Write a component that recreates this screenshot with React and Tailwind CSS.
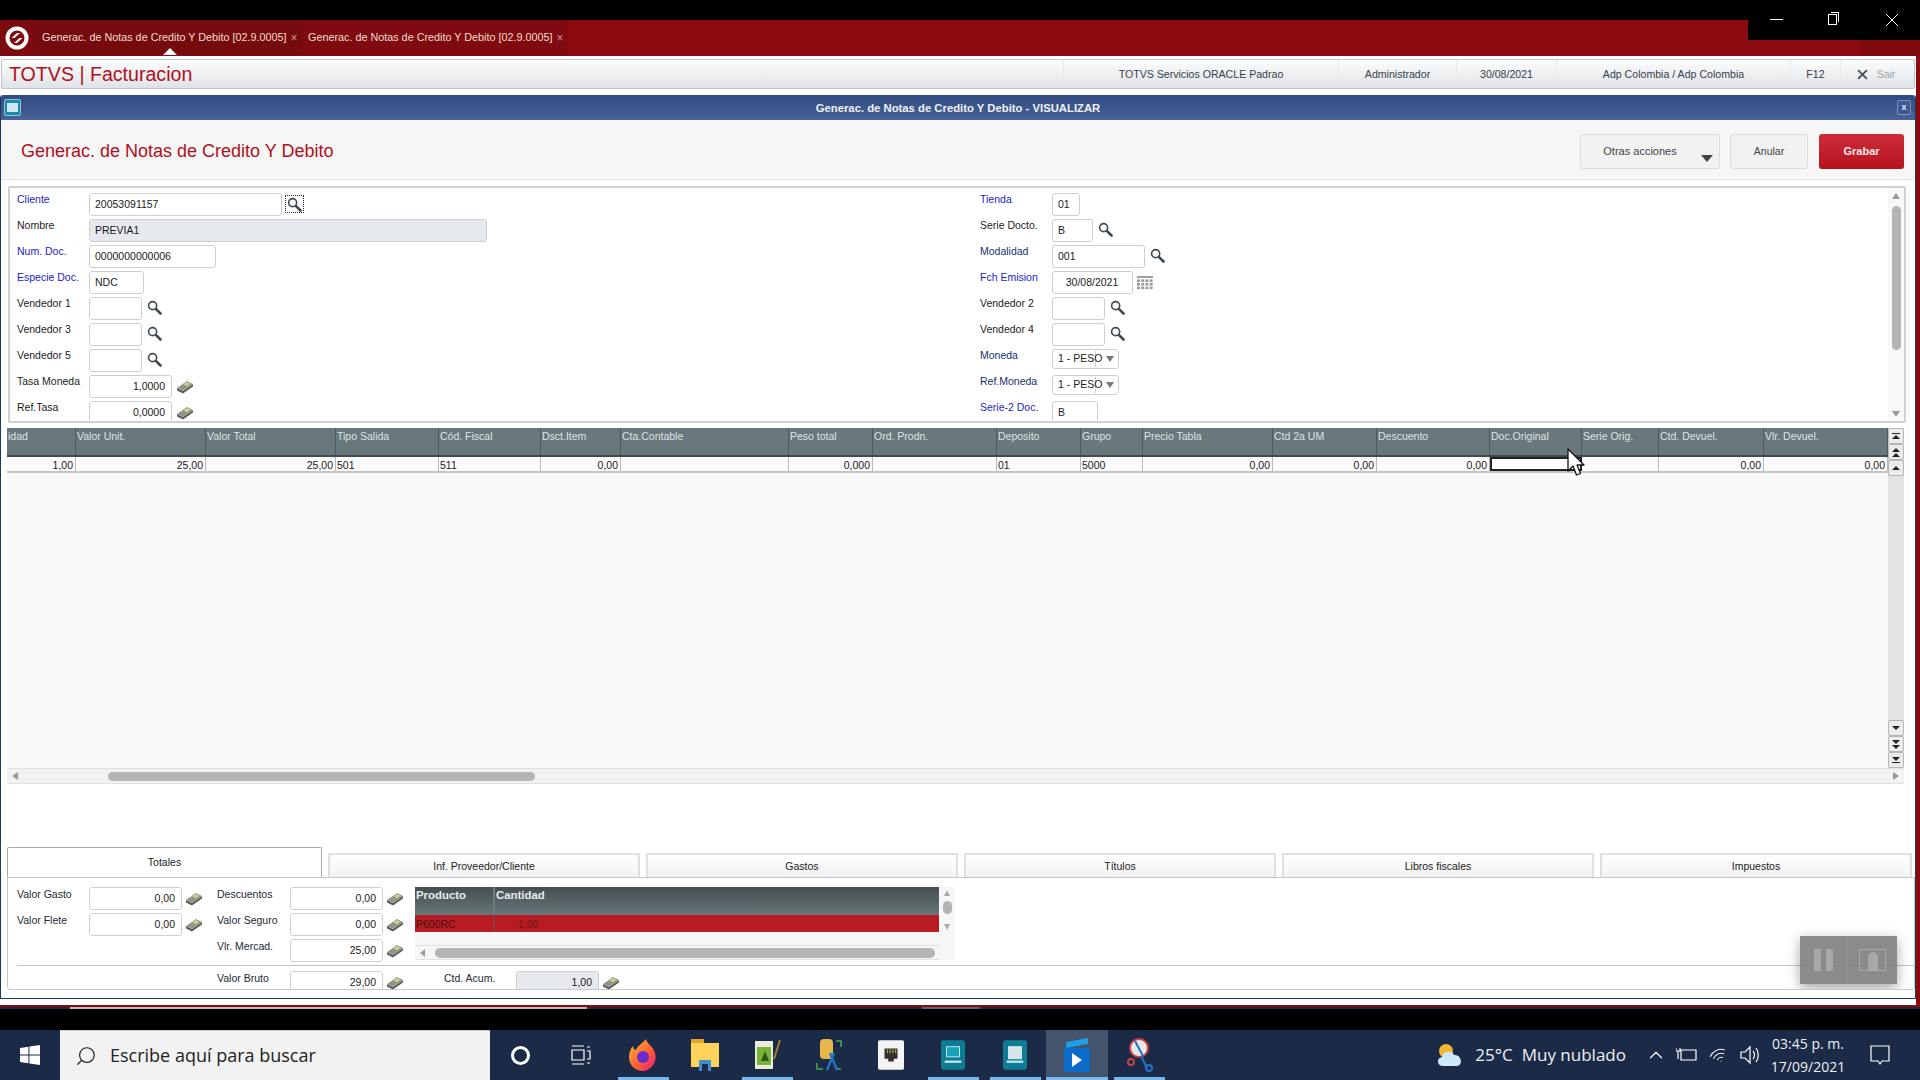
import React from 'react';
import { Search, ChevronUp, Wifi } from 'lucide-react';

const leftRows = [
  { label: 'Cliente', tone: 'blue', w: 193, value: '20053091157', icon: 'boxed' },
  { label: 'Nombre', w: 398, value: 'PREVIA1', disabled: true },
  { label: 'Num. Doc.', tone: 'blue', w: 127, value: '0000000000006' },
  { label: 'Especie Doc.', tone: 'blue', w: 55, value: 'NDC' },
  { label: 'Vendedor 1', w: 53, value: '', icon: 'search' },
  { label: 'Vendedor 3', w: 53, value: '', icon: 'search' },
  { label: 'Vendedor 5', w: 53, value: '', icon: 'search' },
  { label: 'Tasa Moneda', w: 83, value: '1,0000', right: true, icon: 'money' },
  { label: 'Ref.Tasa', w: 83, value: '0,0000', right: true, icon: 'money' },
];

const rightRows = [
  { label: 'Tienda', tone: 'blue', w: 28, value: '01' },
  { label: 'Serie Docto.', w: 41, value: 'B', icon: 'search' },
  { label: 'Modalidad', tone: 'navy', w: 93, value: '001', icon: 'search' },
  { label: 'Fch Emision', tone: 'blue', w: 81, value: '30/08/2021', center: true, icon: 'calendar' },
  { label: 'Vendedor 2', w: 53, value: '', icon: 'search' },
  { label: 'Vendedor 4', w: 53, value: '', icon: 'search' },
  { label: 'Moneda', tone: 'navy', value: '1 - PESO', select: true },
  { label: 'Ref.Moneda', tone: 'navy', value: '1 - PESO', select: true },
  { label: 'Serie-2 Doc.', tone: 'blue', w: 46, value: 'B' },
];

const columns = [
  { title: 'idad', w: 69, value: '1,00', right: true },
  { title: 'Valor Unit.', w: 130, value: '25,00', right: true },
  { title: 'Valor Total', w: 130, value: '25,00', right: true },
  { title: 'Tipo Salida', w: 103, value: '501' },
  { title: 'Cód. Fiscal', w: 102, value: '511' },
  { title: 'Dsct.Item', w: 80, value: '0,00', right: true },
  { title: 'Cta.Contable', w: 168, value: '' },
  { title: 'Peso total', w: 84, value: '0,000', right: true },
  { title: 'Ord. Prodn.', w: 124, value: '' },
  { title: 'Deposito', w: 84, value: '01' },
  { title: 'Grupo', w: 62, value: '5000' },
  { title: 'Precio Tabla', w: 130, value: '0,00', right: true },
  { title: 'Ctd 2a UM', w: 104, value: '0,00', right: true },
  { title: 'Descuento', w: 113, value: '0,00', right: true },
  { title: 'Doc.Original', w: 92, value: '', selected: true },
  { title: 'Serie Orig.', w: 77, value: '' },
  { title: 'Ctd. Devuel.', w: 105, value: '0,00', right: true },
  { title: 'Vlr. Devuel.', w: 124, value: '0,00', right: true },
];

const headerInfo = [
  { text: 'TOTVS Servicios ORACLE Padrao', w: 275 },
  { text: 'Administrador', w: 118 },
  { text: '30/08/2021', w: 100 },
  { text: 'Adp Colombia / Adp Colombia', w: 234 },
  { text: 'F12', w: 50 },
];

const toneClass = {
  blue: 'text-[#1b1bc8]',
  navy: 'text-[#14306e]',
};

const MoneyIcon = ({ className = '' }) => (
  <svg viewBox="0 0 18 14" className={`h-[14px] w-[18px] shrink-0 ${className}`}>
    <polygon points="1,8 7,11 17,4 17,6.5 7,13.5 1,10.5" fill="#5e5e58" />
    <polygon points="1,8 11,1 17,4 7,11" fill="#94948a" />
    <polygon points="7.5,4.2 11,2 14.4,3.8 11,6.2" fill="#c8d88a" />
  </svg>
);

const Magnifier = () => (
  <svg viewBox="0 0 16 16" className="h-[15px] w-[15px]">
    <circle cx="6" cy="6" r="4.3" fill="none" stroke="#3f4a50" strokeWidth="1.7" />
    <line x1="9.4" y1="9.4" x2="14.4" y2="14.4" stroke="#3f4a50" strokeWidth="2.8" strokeLinecap="round" />
  </svg>
);

const RowIcon = ({ type }) => {
  if (type === 'search') return <span className="-mt-[2px] ml-[5px] flex"><Magnifier /></span>;
  if (type === 'money') return <MoneyIcon className="ml-[4px]" />;
  if (type === 'boxed') {
    return (
      <span className="-mt-[1px] ml-[3px] flex h-[18px] w-[19px] items-center justify-center border border-dotted border-[#222]">
        <Magnifier />
      </span>
    );
  }
  if (type === 'calendar') {
    return (
      <svg viewBox="0 0 16 14" className="ml-[4px] h-[14px] w-[16px]">
        <rect width="16" height="2" fill="#9a9ea2" />
        {[0, 1, 2, 3].map((c) =>
          [0, 1, 2].map((r) => <rect key={`${c}-${r}`} x={c * 4.2} y={3.4 + r * 3.6} width="3" height="2.6" fill="#9a9ea2" />)
        )}
      </svg>
    );
  }
  return null;
};

const Field = ({ w, value, disabled, right, center }) => (
  <div
    className={`box-border flex h-[23px] items-center rounded-[3px] border border-[#cfcfcf] pl-[5px] pr-[6px] text-[10.5px] text-[#1a1a1a] ${disabled ? 'bg-[#e6e9ee]' : 'bg-white'} ${right ? 'justify-end' : ''} ${center ? 'justify-center' : ''}`}
    style={{ width: w }}
  >
    {value}
  </div>
);

const SelectField = ({ value }) => (
  <div className="mb-[3px] box-border flex h-[20px] w-[67px] items-center rounded-[3px] border border-[#cfcfcf] bg-white pl-[5px] text-[10.5px] text-[#222]">
    <span className="w-[38px] shrink-0 whitespace-nowrap border-r border-[#cfcfcf]">{value}</span>
    <span className="ml-[10px] h-0 w-0 border-x-[4px] border-t-[6px] border-x-transparent border-t-[#777]" />
  </div>
);

const FormRow = ({ row }) => (
  <div className="flex h-[26px] shrink-0">
    <div className={`w-[72px] text-[10.5px] leading-[12px] ${toneClass[row.tone] || 'text-[#1c1c1c]'}`}>{row.label}</div>
    {row.select ? (
      <SelectField value={row.value} />
    ) : (
      <div className="flex items-center self-start">
        <Field {...row} />
        {row.icon && <RowIcon type={row.icon} />}
      </div>
    )}
  </div>
);

const ScrollBtn = ({ up, double, bar }) => (
  <div className="box-border flex h-[16px] w-[16px] flex-col items-center justify-center gap-[1px] rounded-[2px] border border-[#b5b5b5] bg-[#ececec]">
    {bar && up && <span className="h-[1px] w-[8px] bg-[#222]" />}
    <span className={`h-0 w-0 border-x-[4px] border-x-transparent ${up ? 'border-b-[4px] border-b-[#222]' : 'border-t-[4px] border-t-[#222]'}`} />
    {double && <span className={`h-0 w-0 border-x-[4px] border-x-transparent ${up ? 'border-b-[4px] border-b-[#222]' : 'border-t-[4px] border-t-[#222]'}`} />}
    {bar && !up && <span className="h-[1px] w-[8px] bg-[#222]" />}
  </div>
);

const TotalField = ({ label, labelW, w = 93, value, disabled }) => (
  <div className="flex h-[26px] shrink-0">
    <div className="pt-[1px] text-[10.5px] leading-[12px] text-[#1c2a33]" style={{ width: labelW }}>{label}</div>
    <div className="flex items-center self-start">
      <Field w={w} value={value} right disabled={disabled} />
      <MoneyIcon className="ml-[3px]" />
    </div>
  </div>
);

const Cursor = () => (
  <svg viewBox="0 0 20 30" className="absolute left-[1566px] top-[448px] h-[30px] w-[20px]">
    <path d="M2 1 L2 23 L7 18 L10.5 27 L14.5 25.5 L11 17 L18 17 Z" fill="#fff" stroke="#111" strokeWidth="1.3" strokeLinejoin="round" />
  </svg>
);

const WinLogo = () => (
  <svg viewBox="0 0 20 20" className="h-[20px] w-[20px]">
    <path d="M0 3 L8.4 1.8 V9.5 H0 Z M9.4 1.6 L20 0 V9.5 H9.4 Z M0 10.5 H8.4 V18.2 L0 17 Z M9.4 10.5 H20 V20 L9.4 18.4 Z" fill="#fff" />
  </svg>
);

const TaskIcon = ({ children, active, running }) => (
  <div className={`relative flex h-[50px] w-[62px] items-center justify-center ${active ? 'bg-[#44546c]' : ''}`}>
    {children}
    {running && <span className={`absolute bottom-0 h-[3px] bg-[#76b9ed] ${active ? 'left-0 right-0' : 'left-[6px] right-[5px]'}`} />}
  </div>
);

const Firefox = () => (
  <svg viewBox="0 0 28 32" className="h-[32px] w-[28px]">
    <defs>
      <linearGradient id="ff" x1="0" y1="0" x2="1" y2="1">
        <stop offset="0" stopColor="#ffbd2e" />
        <stop offset="0.6" stopColor="#ff5a36" />
        <stop offset="1" stopColor="#e31587" />
      </linearGradient>
    </defs>
    <path d="M17 0 C18 5 24 7 26 14 C29 24 21 32 14 32 C6 32 0 26 0 18 C0 13 2 9 4 7 C4 10 6 11 7 11 C8 7 13 5 17 0 Z" fill="url(#ff)" />
    <circle cx="14" cy="18" r="6" fill="#6a2bd0" />
  </svg>
);

const Folder = () => (
  <svg viewBox="0 0 28 32" className="h-[32px] w-[28px]">
    <rect x="0" y="0" width="13" height="8" fill="#e0a422" />
    <rect x="0" y="4" width="28" height="24" fill="#ffd35c" />
    <rect x="8" y="21" width="12" height="11" fill="#3a8ed8" />
    <rect x="11" y="25" width="6" height="7" fill="#1e2c49" />
  </svg>
);

const Notepad = () => (
  <svg viewBox="0 0 28 32" className="h-[32px] w-[28px]">
    <rect x="2" y="2" width="18" height="28" fill="#e8ecd8" />
    <rect x="4" y="8" width="14" height="18" fill="#79b339" />
    <path d="M8 22 L12 12 L16 22 Z" fill="#2c5a18" />
    <line x1="21" y1="20" x2="27" y2="1" stroke="#a67a2c" strokeWidth="2" />
  </svg>
);

const ToolsIcon = () => (
  <svg viewBox="0 0 28 32" className="h-[32px] w-[28px]">
    <rect x="5" y="0" width="13" height="20" rx="4" fill="#e6b84a" />
    <path d="M21 2 H26 V8 M2 24 V30 H8 M21 30 H26" fill="none" stroke="#3e8a4c" strokeWidth="2" />
    <path d="M12 31 L19 14 M15 14 L22 31" stroke="#2272c8" strokeWidth="2.4" />
  </svg>
);

const NetIcon = () => (
  <svg viewBox="0 0 28 32" className="h-[32px] w-[26px]">
    <rect x="0" y="0" width="28" height="32" rx="2" fill="#f4f4f4" />
    <path d="M7 9 H21 V20 H17 V23 H11 V20 H7 Z" fill="#303030" />
    <path d="M10 10 V14 M13 10 V14 M16 10 V14 M19 10 V14" stroke="#d8c858" strokeWidth="1" />
  </svg>
);

const TealIcon = ({ light }) => (
  <svg viewBox="0 0 26 32" className="h-[32px] w-[24px]">
    <rect width="26" height="32" rx="3" fill="#0f7c96" />
    <rect x="6" y="7" width="14" height={light ? 13 : 11} fill={light ? '#d7e5ea' : '#17a0bc'} stroke="#d8eef4" />
    <rect x="4" y="22" width="18" height="2.5" fill="#bfe6ee" />
  </svg>
);

const BlueDoc = () => (
  <svg viewBox="0 0 30 34" className="h-[34px] w-[30px]">
    <path d="M4 4 L26 0 V6 L4 10 Z" fill="#1ea0e8" />
    <rect x="2" y="10" width="26" height="24" fill="#0a6cc8" />
    <path d="M10 15 L20 22 L10 29 Z" fill="#fff" />
  </svg>
);

const Scissors = () => (
  <svg viewBox="0 0 28 34" className="h-[34px] w-[28px]">
    <circle cx="14" cy="10" r="9" fill="#e8e8e8" stroke="#c84048" strokeWidth="2" />
    <circle cx="6" cy="24" r="3" fill="none" stroke="#c84048" strokeWidth="2" />
    <path d="M10 3 L18 18 M16 18 L22 30" stroke="#2272c8" strokeWidth="2" />
    <circle cx="24" cy="30" r="3" fill="none" stroke="#2272c8" strokeWidth="2" />
  </svg>
);

const taskIcons = [
  { node: <Firefox />, running: true },
  { node: <Folder /> },
  { node: <Notepad />, running: true },
  { node: <ToolsIcon /> },
  { node: <NetIcon /> },
  { node: <TealIcon />, running: true },
  { node: <TealIcon light />, running: true },
  { node: <BlueDoc />, running: true, active: true },
  { node: <Scissors />, running: true },
];

const App = () => {
  return (
    <div className="relative flex h-[1080px] w-[1920px] flex-col overflow-hidden bg-black text-[#222]" style={{ fontFamily: '"Liberation Sans", Arial, sans-serif' }}>
      <div className="h-[20px] shrink-0" />

      {/* Window controls of the remote session */}
      <div className="absolute right-0 top-0 z-10 flex h-[40px] w-[172px] items-start bg-black pt-[13px] text-white">
        <span className="ml-[22px] mt-[6px] h-[1px] w-[13px] bg-white" />
        <span className="relative ml-[45px] mt-[1px] h-[11px] w-[9px] border border-white">
          <span className="absolute -right-[3px] -top-[3px] h-[10px] w-[8px] border-r border-t border-white" />
        </span>
        <svg viewBox="0 0 14 14" className="ml-[48px] h-[14px] w-[14px]"><path d="M1 1 L13 13 M13 1 L1 13" stroke="#fff" strokeWidth="1" /></svg>
      </div>

      {/* App frame */}
      <div className="flex h-[985px] shrink-0 flex-col bg-white">
        {/* Red tab bar */}
        <div className="flex h-[36px] shrink-0 bg-[#8a0a10]">
          <div className="flex w-[36px] items-center justify-center bg-[#7c0a0e] pr-[2px]">
            <svg viewBox="0 0 24 24" className="h-[24px] w-[24px]">
              <circle cx="12" cy="12" r="9.5" fill="none" stroke="#fff" strokeWidth="4" />
              <path d="M6.5 12 L12 7 L15 7 L9.5 12 Z M9 17 L14.5 12 L17.5 12 L12 17 Z" fill="#fff" />
            </svg>
          </div>
          <div className="relative flex h-[35px] w-[266px] items-center bg-[#760b0e] pl-[6px] text-[10.8px] text-[#f3dcd2]">
            <span className="whitespace-nowrap">Generac. de Notas de Credito Y Debito [02.9.0005]</span>
            <span className="ml-[4px] text-[12px] text-[#c99]">×</span>
            <span className="absolute bottom-0 left-[127px] h-0 w-0 border-x-[7px] border-b-[7px] border-x-transparent border-b-white" />
          </div>
          <div className="flex h-[35px] w-[266px] items-center bg-[#7f0a0f] pl-[6px] text-[10.8px] text-[#f3dcd2]">
            <span className="whitespace-nowrap">Generac. de Notas de Credito Y Debito [02.9.0005]</span>
            <span className="ml-[4px] text-[12px] text-[#c99]">×</span>
          </div>
          <div className="flex-1" />
          <div className="flex h-[35px] w-[60px] items-end justify-end bg-[#7f0a0f] pb-[16px] pr-[10px]">
            <span className="mb-[3px] mr-[15px] h-[3px] w-[12px] bg-[#d8c8c8]" />
            <span className="h-[8px] w-[8px] rounded-full bg-[#c9b8b8]" />
          </div>
        </div>

        <div className="flex min-h-0 flex-1 flex-col border-r-[4px] border-[#8a0a10]">
          {/* Module header */}
          <div className="mx-[1px] mt-[3px] flex h-[30px] shrink-0 items-center rounded-[2px] border border-[#c0c4c8] bg-gradient-to-b from-[#fdfdfd] to-[#dfe3e7]">
            <span className="ml-[7px] mt-[1px] whitespace-nowrap text-[19.6px] leading-none text-[#b01020]">TOTVS | Facturacion</span>
            <div className="flex-1" />
            {headerInfo.map((item) => (
              <div key={item.text} className="flex h-full items-center justify-center whitespace-nowrap border-l border-[#e6e9ec] pt-[1px] text-[10.6px] text-[#33424e]" style={{ width: item.w }}>
                {item.text}
              </div>
            ))}
            <div className="flex h-full w-[74px] items-center justify-center gap-[9px] border-l border-[#e6e9ec] pr-[3px] pt-[1px] text-[10.5px] text-[#9aa4ac]">
              <svg viewBox="0 0 10 10" className="h-[11px] w-[11px]"><path d="M1 1 L9 9 M9 1 L1 9" stroke="#4a5560" strokeWidth="1.8" /></svg>
              Sair
            </div>
          </div>

          {/* Dialog window */}
          <div className="mx-0 mt-[6px] flex h-[904px] shrink-0 flex-col rounded-t-[3px] border border-t-0 border-[#1a3a5c] bg-white">
            <div className="flex h-[25px] shrink-0 items-center rounded-t-[3px] bg-gradient-to-b from-[#2e4a80] to-[#4a6398]">
              <span className="ml-[3px] flex h-[17px] w-[17px] items-center justify-center rounded-[2px] border border-[#8cc8d8] bg-[#1d8aa8]">
                <span className="h-[9px] w-[11px] bg-[#cfe8f0]" />
              </span>
              <span className="flex-1 pr-[2px] pt-[1px] text-center text-[11.3px] font-bold text-[#eef1f7]">Generac. de Notas de Credito Y Debito - VISUALIZAR</span>
              <span className="mr-[4px] flex h-[15px] w-[14px] items-center justify-center rounded-[2px] border border-[#7f93bb] bg-[#3f5a92] text-[9px] font-bold text-[#e4e8f2]">x</span>
            </div>

            {/* Title and actions */}
            <div className="flex h-[60px] shrink-0 items-center border-b border-[#e4e4e4] bg-[#f6f6f6]">
              <h1 className="ml-[20px] mt-[3px] whitespace-nowrap text-[18px] leading-none text-[#b01020]">Generac. de Notas de Credito Y Debito</h1>
              <div className="flex-1" />
              <div className="mr-[11px] mt-[4px] flex items-center">
                <button className="relative box-border h-[35px] w-[140px] rounded-[3px] border border-[#dcdcdc] bg-[#f2f2f2] pr-[20px] text-[11px] text-[#444]">
                  Otras acciones
                  <span className="absolute bottom-[6px] right-[6px] h-0 w-0 border-x-[6px] border-t-[7px] border-x-transparent border-t-[#444]" />
                </button>
                <button className="ml-[10px] box-border h-[35px] w-[78px] rounded-[3px] border border-[#dcdcdc] bg-[#f2f2f2] text-[10.5px] text-[#444]">Anular</button>
                <button className="ml-[11px] box-border h-[35px] w-[85px] rounded-[3px] bg-gradient-to-b from-[#cc2c38] to-[#b8101e] text-[11px] font-bold text-[#f8e8e8]">Grabar</button>
              </div>
            </div>

            {/* Form */}
            <div className="ml-[7px] mr-[9px] mt-[6px] flex h-[237px] shrink-0 rounded-[2px] border-2 border-[#d0d0d0] bg-white">
              <div className="flex flex-1 overflow-hidden pl-[7px] pt-[5px]">
                <div className="flex w-[963px] flex-col">
                  {leftRows.map((row) => <FormRow key={row.label} row={row} />)}
                </div>
                <div className="flex flex-col">
                  {rightRows.map((row) => <FormRow key={row.label} row={row} />)}
                </div>
              </div>
              <div className="flex w-[16px] flex-col items-center bg-[#f8f8f8]">
                <span className="mt-[5px] h-0 w-0 border-x-[4px] border-b-[6px] border-x-transparent border-b-[#999]" />
                <div className="mt-[7px] h-[144px] w-[9px] rounded-full bg-[#b4b4b4]" />
                <div className="flex-1" />
                <span className="mb-[4px] h-0 w-0 border-x-[4px] border-t-[6px] border-x-transparent border-t-[#999]" />
              </div>
            </div>

            {/* Items grid */}
            <div className="ml-[6px] mt-[5px] flex h-[340px] shrink-0">
              <div className="flex w-[1881px] flex-col bg-[#fafafa]">
                <div className="flex h-[29px] shrink-0 border-b-2 border-[#3f4a4c] bg-[#68787c]">
                  {columns.map((c) => (
                    <div key={c.title} className="box-border whitespace-nowrap border-r border-[#4d5a5d] pl-[1px] pt-[2px] text-[10.5px] leading-[12px] text-[#dde4e4]" style={{ width: c.w }}>{c.title}</div>
                  ))}
                </div>
                <div className="flex h-[16px] shrink-0 border-b-2 border-[#c4c4c4] bg-[#fbfbfb]">
                  {columns.map((c) => (
                    <div key={c.title} className={`box-border pl-[1px] pr-[2px] text-[10.5px] leading-[17px] text-[#1a1a1a] ${c.right ? 'text-right' : ''} ${c.selected ? 'border-2 border-[#222] bg-white' : 'border-r border-[#b8b8b8]'}`} style={{ width: c.w }}>{c.value}</div>
                  ))}
                </div>
              </div>
              <div className="flex w-[16px] flex-col justify-between bg-[#e4e4e4]">
                <div className="flex flex-col">
                  <ScrollBtn up bar />
                  <ScrollBtn up double />
                  <ScrollBtn up />
                </div>
                <div className="flex flex-col">
                  <ScrollBtn />
                  <ScrollBtn double />
                  <ScrollBtn bar />
                </div>
              </div>
            </div>
            <div className="ml-[6px] flex h-[16px] w-[1897px] shrink-0 items-center border-y border-[#e0e0e0] bg-[#f2f2f2] px-[5px]">
              <span className="h-0 w-0 border-y-[4px] border-r-[6px] border-y-transparent border-r-[#999]" />
              <div className="ml-[90px] h-[9px] w-[427px] rounded-full bg-[#b4b4b4]" />
              <div className="flex-1" />
              <span className="h-0 w-0 border-y-[4px] border-l-[6px] border-y-transparent border-l-[#999]" />
            </div>

            <div className="h-[63px] shrink-0" />

            {/* Folders */}
            <div className="ml-[6px] flex h-[30px] shrink-0 items-end gap-[6px]">
              <div className="box-border flex h-[30px] w-[315px] items-center justify-center rounded-t-[2px] border border-b-0 border-[#aaa] bg-white text-[10.5px] text-[#222]">Totales</div>
              {['Inf. Proveedor/Cliente', 'Gastos', 'Títulos', 'Libros fiscales', 'Impuestos'].map((tab) => (
                <div key={tab} className="box-border flex h-[24px] w-[312px] items-center justify-center border-2 border-b-0 border-[#e0e0e0] bg-gradient-to-b from-white to-[#f2f2f2] pt-[1px] text-[10.5px] text-[#222]">{tab}</div>
              ))}
            </div>

            {/* Totals panel */}
            <div className="relative ml-[6px] flex h-[113px] shrink-0 flex-col overflow-hidden rounded-b-[3px] border border-[#c4c8cc] bg-white">
              <div className="flex h-[88px] pl-[9px] pt-[9px]">
                <div className="flex w-[200px] flex-col">
                  <TotalField label="Valor Gasto" labelW={72} value="0,00" />
                  <TotalField label="Valor Flete" labelW={72} value="0,00" />
                </div>
                <div className="flex w-[198px] flex-col">
                  <TotalField label="Descuentos" labelW={73} value="0,00" />
                  <TotalField label="Valor Seguro" labelW={73} value="0,00" />
                  <TotalField label="Vlr. Mercad." labelW={73} value="25,00" />
                </div>
                <div className="flex h-[73px] w-[540px] bg-[#f6f6f6]">
                  <div className="flex w-[524px] flex-col">
                    <div className="flex h-[28px] shrink-0 bg-gradient-to-b from-[#454e50] to-[#67777b] text-[11.4px] font-bold leading-[14px] text-[#e6ecec]">
                      <div className="w-[80px] border-r-2 border-[#6f7c80] pl-[1px] pt-[1px]">Producto</div>
                      <div className="flex-1 pl-[1px] pt-[1px]">Cantidad</div>
                    </div>
                    <div className="flex h-[17px] shrink-0 bg-[#b81c22] text-[10.5px] leading-[18px] text-[#701518]">
                      <div className="w-[80px] border-r-2 border-[#8e3a3e] pl-[1px] text-[#4a0e12]">P600RC</div>
                      <div className="flex-1 pl-[23px]">1,00</div>
                    </div>
                    <div className="mt-[13px] flex h-[15px] items-center border-y border-[#e0e0e0] pl-[5px]">
                      <span className="h-0 w-0 border-y-[4px] border-r-[5px] border-y-transparent border-r-[#999]" />
                      <div className="ml-[10px] h-[10px] w-[500px] rounded-full bg-[#b4b4b4]" />
                    </div>
                  </div>
                  <div className="flex w-[16px] flex-col items-center justify-between py-[3px]">
                    <span className="h-0 w-0 border-x-[3px] border-b-[6px] border-x-transparent border-b-[#aaa]" />
                    <div className="-mt-[6px] h-[13px] w-[9px] rounded-full bg-[#b4b4b4]" />
                    <span className="mb-[27px] h-0 w-0 border-x-[3px] border-t-[6px] border-x-transparent border-t-[#aaa]" />
                  </div>
                </div>
              </div>
              <div className="ml-[9px] h-[2px] bg-[#c4c4c4]" />
              <div className="flex overflow-hidden pl-[209px] pt-[5px]">
                <TotalField label="Valor Bruto" labelW={73} value="29,00" />
                <div className="ml-[40px]">
                  <TotalField label="Ctd. Acum." labelW={72} w={83} value="1,00" disabled />
                </div>
              </div>

              {/* Screen recorder overlay */}
              <div className="absolute left-[1792px] top-[58px] flex h-[48px] w-[97px] bg-[#7e7e7e]/90 shadow-[0_4px_12px_rgba(0,0,0,0.35)]">
                <div className="flex w-[48px] items-center justify-center gap-[5px] border-r border-[#939393]">
                  <span className="h-[22px] w-[7px] bg-[#a8a8a8]" />
                  <span className="h-[22px] w-[7px] bg-[#a8a8a8]" />
                </div>
                <div className="flex flex-1 items-center justify-center">
                  <div className="flex h-[22px] w-[27px] items-end justify-center border border-[#a8a8a8]">
                    <span className="h-[18px] w-[10px] rounded-t-full bg-[#a8a8a8]" />
                  </div>
                </div>
              </div>
            </div>
          </div>
        </div>
      </div>

      {/* Bottom edge of the remote window */}
      <div className="h-[2px] shrink-0 bg-[#8a0a10]" />
      <div className="flex h-[2px] shrink-0 bg-[#1b2b4c]">
        <span className="ml-[70px] w-[517px] bg-[#bdbdbd]" />
        <span className="ml-[335px] w-[58px] bg-[#5a6478]" />
      </div>

      <div className="h-[21px] shrink-0 bg-black" />

      {/* Windows taskbar */}
      <div className="flex h-[50px] shrink-0 items-center bg-[#1b2a47] text-[#eef0f4]" style={{ fontFamily: '"Open Sans", "Noto Sans", sans-serif' }}>
        <div className="flex w-[60px] items-center justify-center"><WinLogo /></div>
        <div className="flex h-[50px] w-[430px] items-center border-t border-[#cfcfcf] bg-[#f2f2f2] pl-[15px] text-[#222]">
          <Search size={22} strokeWidth={1.3} className="-scale-x-100" />
          <span className="ml-[13px] text-[18px]">Escribe aquí para buscar</span>
        </div>
        <div className="flex w-[60px] justify-center"><span className="h-[19px] w-[19px] rounded-full border-[3px] border-white" /></div>
        <div className="flex w-[62px] justify-center">
          <svg viewBox="0 0 20 20" className="h-[20px] w-[20px]"><path d="M1 1 H13 M1 19 H13 M1 5 H13 V15 H1 Z M16 2 H19 M16 6 H19 V14 H16 M16 18 H19" stroke="#fff" strokeWidth="1.2" fill="none" /></svg>
        </div>
        <div className="flex">
          {taskIcons.map((t, i) => (
            <TaskIcon key={i} active={t.active} running={t.running}>{t.node}</TaskIcon>
          ))}
        </div>
        <div className="flex-1" />
        <svg viewBox="0 0 28 24" className="h-[24px] w-[28px]">
          <circle cx="10" cy="8" r="7" fill="#f2b632" />
          <path d="M7 23 C1 23 0 15 6 14 C7 8 16 7 18 12 C25 11 28 22 21 23 Z" fill="#cde8fb" />
        </svg>
        <span className="ml-[11px] whitespace-nowrap text-[17px]">25°C</span>
        <span className="ml-[9px] whitespace-nowrap text-[17px]">Muy nublado</span>
        <ChevronUp size={22} strokeWidth={1.4} className="ml-[19px]" />
        <svg viewBox="0 0 22 16" className="ml-[9px] h-[16px] w-[22px]"><path d="M5 3 H20 V13 H5 Z M0 1 V4 H4 V1 M2 4 V12" stroke="#fff" fill="none" strokeWidth="1.2" /></svg>
        <Wifi size={19} strokeWidth={1.3} className="ml-[11px] rotate-[-25deg]" />
        <svg viewBox="0 0 20 20" className="ml-[12px] h-[20px] w-[20px]"><path d="M1 7 H5 L10 2 V18 L5 13 H1 Z M13 6 C15 8 15 12 13 14 M16 3 C19 7 19 13 16 17" stroke="#fff" fill="none" strokeWidth="1.2" /></svg>
        <div className="ml-[10px] flex w-[76px] flex-col items-center text-[14px] leading-[23px]">
          <span className="whitespace-nowrap">03:45 p. m.</span>
          <span>17/09/2021</span>
        </div>
        <svg viewBox="0 0 20 20" className="ml-[24px] mr-[30px] h-[22px] w-[20px]"><path d="M1 7 H1 M1 1 H19 V16 H12 L10 19 L8 16 H1 Z" stroke="#fff" fill="none" strokeWidth="1.2" /></svg>
      </div>

      <Cursor />
    </div>
  );
};

export default App;
